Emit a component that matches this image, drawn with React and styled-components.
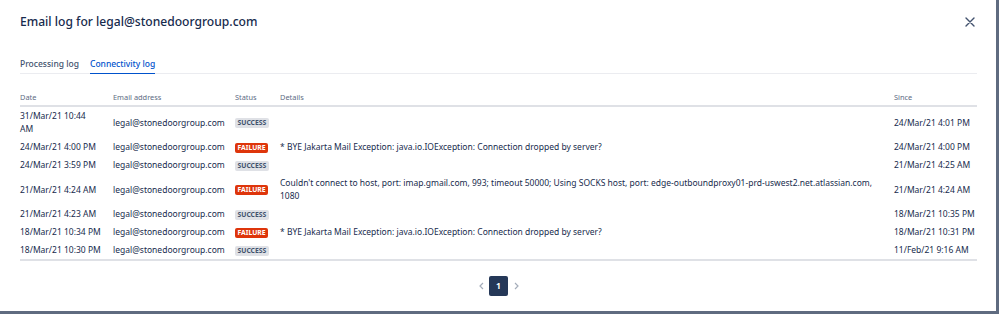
import React from "react";
import styled, { createGlobalStyle } from "styled-components";

const Global = createGlobalStyle`
  html, body { margin: 0; padding: 0; }
  body {
    background: #5f6b80;
    font-family: "Noto Sans", "Open Sans", sans-serif;
    color: #172b4d;
    width: 999px;
    height: 314px;
    overflow: hidden;
  }
`;

const Modal = styled.div`
  width: 996px;
  height: 311px;
  background: #ffffff;
  box-sizing: border-box;
  padding: 14px 19px 0 20px;
  display: flex;
  flex-direction: column;
`;

const Header = styled.div`
  display: flex;
  align-items: center;
  justify-content: space-between;
  height: 16px;
`;

const Title = styled.h1`
  margin: 0;
  font-size: 12.1px;
  line-height: 16px;
  font-weight: 500;
  color: #172b4d;
`;

const CloseButton = styled.button`
  border: none;
  background: transparent;
  padding: 0;
  width: 12px;
  height: 12px;
  display: flex;
  align-items: center;
  justify-content: center;
  margin-right: 1px;
  cursor: pointer;
`;

const Tabs = styled.div`
  margin-top: 27px;
  display: flex;
  gap: 11px;
  border-bottom: 1.5px solid #ebecf0;
`;

const Tab = styled.div`
  font-size: 8.5px;
  line-height: 13px;
  font-weight: 500;
  padding-bottom: 3px;
  margin-bottom: -1.5px;
  color: ${(p) => (p.$active ? "#0052cc" : "#42526e")};
  border-bottom: 1.5px solid ${(p) => (p.$active ? "#0052cc" : "transparent")};
`;

const Table = styled.table`
  margin-top: 17px;
  width: 957px;
  border-collapse: collapse;
  table-layout: fixed;
  border-bottom: 2px solid #dfe1e6;
`;

const Th = styled.th`
  text-align: left;
  font-size: 7.4px;
  line-height: 13px;
  font-weight: 400;
  color: #5e6c84;
  padding: 0 0 1px 0;
  border-bottom: 2px solid #dfe1e6;
`;

const Td = styled.td`
  font-size: 8.5px;
  line-height: 13px;
  color: #172b4d;
  padding: 2.5px ${(p) => p.$pr || 0}px 2.5px 0;
  vertical-align: middle;
`;

const Lozenge = styled.span`
  display: inline-block;
  font-size: 6.8px;
  line-height: 10px;
  height: 10px;
  font-weight: 700;
  text-transform: uppercase;
  padding: 0 2.5px;
  border-radius: 2px;
  vertical-align: middle;
  background: ${(p) => (p.$failure ? "#de350b" : "#dfe1e6")};
  color: ${(p) => (p.$failure ? "#ffffff" : "#42526e")};
`;

const Pager = styled.div`
  display: flex;
  justify-content: center;
  align-items: center;
  gap: 5px;
  margin-top: 15px;
`;

const Chevron = styled.span`
  width: 6px;
  height: 20px;
  display: flex;
  align-items: center;
  justify-content: center;
`;

const PageButton = styled.button`
  width: 19px;
  height: 20px;
  border: none;
  border-radius: 2px;
  background: #253858;
  color: #ffffff;
  font-family: "Noto Sans", sans-serif;
  font-size: 8.5px;
  font-weight: 700;
  padding: 0;
`;

const rows = [
  [["31/Mar/21 10:44", "AM"], "success", "", "24/Mar/21 4:01 PM"],
  [["24/Mar/21 4:00 PM"], "failure", "* BYE Jakarta Mail Exception: java.io.IOException: Connection dropped by server?", "24/Mar/21 4:00 PM"],
  [["24/Mar/21 3:59 PM"], "success", "", "21/Mar/21 4:25 AM"],
  [["21/Mar/21 4:24 AM"], "failure", "Couldn't connect to host, port: imap.gmail.com, 993; timeout 50000; Using SOCKS host, port: edge-outboundproxy01-prd-uswest2.net.atlassian.com, 1080", "21/Mar/21 4:24 AM"],
  [["21/Mar/21 4:23 AM"], "success", "", "18/Mar/21 10:35 PM"],
  [["18/Mar/21 10:34 PM"], "failure", "* BYE Jakarta Mail Exception: java.io.IOException: Connection dropped by server?", "18/Mar/21 10:31 PM"],
  [["18/Mar/21 10:30 PM"], "success", "", "11/Feb/21 9:16 AM"],
];

export default function App() {
  return (
    <>
      <Global />
      <Modal>
        <Header>
          <Title>Email log for legal@stonedoorgroup.com</Title>
          <CloseButton aria-label="Close">
            <svg width="10" height="10" viewBox="0 0 10 10">
              <path d="M1 1 L9 9 M9 1 L1 9" stroke="#42526e" strokeWidth="1.4" strokeLinecap="round" />
            </svg>
          </CloseButton>
        </Header>
        <Tabs>
          <Tab>Processing log</Tab>
          <Tab $active>Connectivity log</Tab>
        </Tabs>
        <Table>
          <colgroup>
            <col style={{ width: 93 }} />
            <col style={{ width: 122 }} />
            <col style={{ width: 45 }} />
            <col style={{ width: 614 }} />
            <col style={{ width: 83 }} />
          </colgroup>
          <thead>
            <tr>
              <Th>Date</Th>
              <Th>Email address</Th>
              <Th>Status</Th>
              <Th>Details</Th>
              <Th>Since</Th>
            </tr>
          </thead>
          <tbody>
            {rows.map((r, i) => (
              <tr key={i}>
                <Td $pr={4}>
                  {r[0].map((part, j) => (
                    <React.Fragment key={j}>
                      {j > 0 && <br />}
                      {part}
                    </React.Fragment>
                  ))}
                </Td>
                <Td>legal@stonedoorgroup.com</Td>
                <Td>
                  <Lozenge $failure={r[1] === "failure"}>{r[1]}</Lozenge>
                </Td>
                <Td $pr={16}>{r[2]}</Td>
                <Td>{r[3]}</Td>
              </tr>
            ))}
          </tbody>
        </Table>
        <Pager>
          <Chevron>
            <svg width="5" height="8" viewBox="0 0 5 8">
              <path d="M4 1 L1 4 L4 7" stroke="#a5adba" strokeWidth="1.2" fill="none" />
            </svg>
          </Chevron>
          <PageButton>1</PageButton>
          <Chevron>
            <svg width="5" height="8" viewBox="0 0 5 8">
              <path d="M1 1 L4 4 L1 7" stroke="#a5adba" strokeWidth="1.2" fill="none" />
            </svg>
          </Chevron>
        </Pager>
      </Modal>
    </>
  );
}
